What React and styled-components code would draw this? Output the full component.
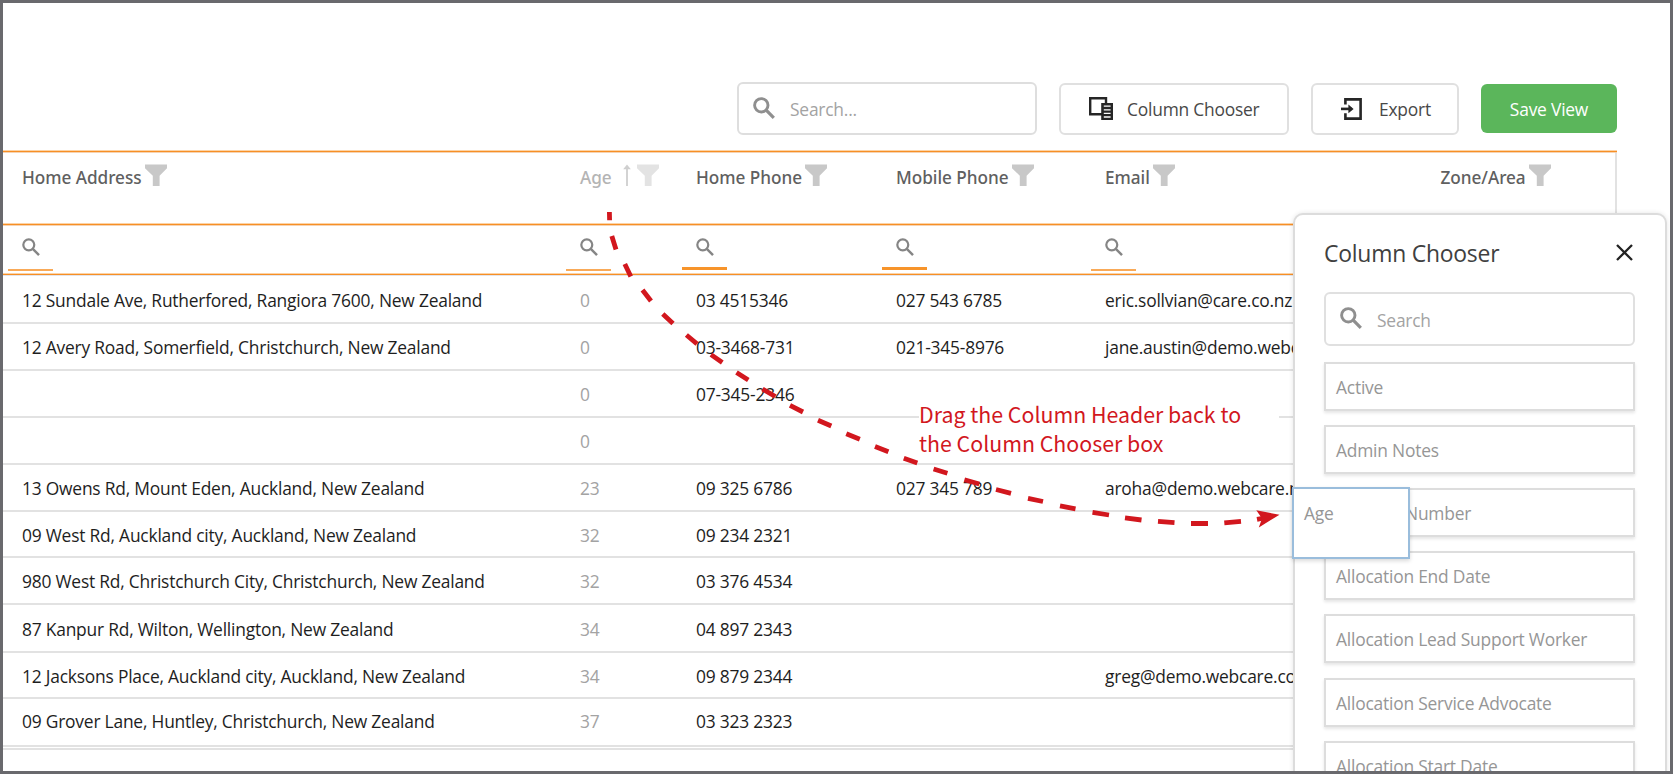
import React from 'react';
import styled, { createGlobalStyle } from 'styled-components';

const columns = [
  { key: 'address', title: 'Home Address', bar: 'thin' },
  { key: 'age', title: 'Age', bar: 'thin', dragging: true },
  { key: 'home', title: 'Home Phone', bar: 'thick' },
  { key: 'mobile', title: 'Mobile Phone', bar: 'thick' },
  { key: 'email', title: 'Email', bar: 'thin' },
  { key: 'zone', title: 'Zone/Area' },
];

const rows = [
  { address: '12 Sundale Ave, Rutherfored, Rangiora 7600, New Zealand', age: 0, home: '03 4515346', mobile: '027 543 6785', email: 'eric.sollvian@care.co.nz', height: 48 },
  { address: '12 Avery Road, Somerfield, Christchurch, New Zealand', age: 0, home: '03-3468-731', mobile: '021-345-8976', email: 'jane.austin@demo.webc', height: 47 },
  { age: 0, home: '07-345-2346', height: 47 },
  { age: 0, height: 47 },
  { address: '13 Owens Rd, Mount Eden, Auckland, New Zealand', age: 23, home: '09 325 6786', mobile: '027 345 789', email: 'aroha@demo.webcare.n', height: 47 },
  { address: '09 West Rd, Auckland city, Auckland, New Zealand', age: 32, home: '09 234 2321', height: 46 },
  { address: '980 West Rd, Christchurch City, Christchurch, New Zealand', age: 32, home: '03 376 4534', height: 47 },
  { address: '87 Kanpur Rd, Wilton, Wellington, New Zealand', age: 34, home: '04 897 2343', height: 48 },
  { address: '12 Jacksons Place, Auckland city, Auckland, New Zealand', age: 34, home: '09 879 2344', email: 'greg@demo.webcare.co', height: 46 },
  { address: '09 Grover Lane, Huntley, Christchurch, New Zealand', age: 37, home: '03 323 2323', height: 48 },
];

const hiddenColumns = [
  'Active',
  'Admin Notes',
  'Number',
  'Allocation End Date',
  'Allocation Lead Support Worker',
  'Allocation Service Advocate',
  'Allocation Start Date',
];

const dashes = [
  [609.4, 212, 609.6, 220.3],
  [611.8, 236, 616, 249.5],
  [624.8, 264, 630.8, 276.5],
  [642.5, 290, 651, 301],
  [662.8, 314, 673, 323.5],
  [686.4, 335, 697, 343.8],
  [711, 354.6, 722.3, 362.5],
  [736.5, 372.5, 748.3, 380],
  [762.5, 389, 775.3, 396.5],
  [790, 405.4, 803, 412],
  [818, 420.2, 831.3, 426],
  [846.3, 433.8, 859.8, 439.3],
  [875, 446.5, 888.4, 451.8],
  [903.8, 458.2, 917.3, 463],
  [933.6, 469, 947.4, 473.2],
  [964.4, 479.8, 979.3, 484],
  [996, 489.5, 1011, 493.3],
  [1028, 498.3, 1043, 501.5],
  [1060, 505.8, 1075.5, 508.8],
  [1092.5, 512.4, 1109, 515],
  [1125, 517.8, 1141.5, 520],
  [1158, 521.4, 1174.5, 522.7],
  [1191, 523.5, 1208, 523.5],
  [1224.3, 522.8, 1241, 521.3],
  [1257, 519.3, 1264, 518],
];

const SearchIcon = ({ size, stroke = 2.9 }) => (
  <IconSvg width={size} height={size} viewBox="0 0 22 22">
    <circle cx="8.3" cy="8.3" r="6.7" fill="none" stroke="currentColor" strokeWidth={stroke} />
    <path d="M13.2 13.2L20.8 20.8" stroke="currentColor" strokeWidth={stroke + 0.3} />
  </IconSvg>
);

const FunnelIcon = () => (
  <IconSvg width="22" height="22" viewBox="0 0 22 22">
    <path d="M0 0.5H22V4.2L14.6 11.8V22H7.8V11.8L0 4.2Z" fill="currentColor" />
  </IconSvg>
);

const SortIcon = () => (
  <IconSvg width="8" height="22" viewBox="0 0 8 22">
    <path d="M4 3V22" stroke="currentColor" strokeWidth="1.8" />
    <path d="M4 0.5L7.8 5.2H0.2Z" fill="currentColor" />
  </IconSvg>
);

const ChooserIcon = () => (
  <IconSvg width="24" height="23" viewBox="0 0 24 23">
    <path d="M13 17.2H1.2V1.2H17V6.5" fill="none" stroke="currentColor" strokeWidth="2.4" />
    <path d="M12.2 6H24V23H12.2Z" fill="currentColor" />
    <path d="M14.8 9.2H21.6M14.8 12.8H21.6M14.8 16.4H21.6M14.8 20H21.6" stroke="#fff" strokeWidth="1.3" />
  </IconSvg>
);

const ExportIcon = () => (
  <IconSvg width="21" height="22" viewBox="0 0 21 22">
    <path d="M4.4 6.6V1.4H19.6V20.6H4.4V15.2" fill="none" stroke="currentColor" strokeWidth="2.6" />
    <path d="M0 10.9H11" stroke="currentColor" strokeWidth="2.6" />
    <path d="M7.4 6.6L12.6 10.9L7.4 15.2Z" fill="currentColor" />
  </IconSvg>
);

const CloseIcon = () => (
  <IconSvg width="17" height="17" viewBox="0 0 17 17">
    <path d="M1 1L16 16M16 1L1 16" stroke="currentColor" strokeWidth="2.3" />
  </IconSvg>
);

export default function App() {
  return (
    <Frame>
      <GlobalStyle />
      <Toolbar>
        <SearchBox>
          <SearchIcon size={22} />
          <span>Search...</span>
        </SearchBox>
        <ChooserButton>
          <ChooserIcon />
          Column Chooser
        </ChooserButton>
        <ExportButton>
          <ExportIcon />
          Export
        </ExportButton>
        <SaveButton>Save View</SaveButton>
      </Toolbar>

      <Table>
        <OrangeLine />
        <HeaderRow>
          {columns.map((col) => (
            <HeaderCell key={col.key} $faded={col.dragging}>
              <span>{col.title}</span>
              {col.dragging && (
                <SortMark>
                  <SortIcon />
                </SortMark>
              )}
              <FilterMark $faded={col.dragging}>
                <FunnelIcon />
              </FilterMark>
            </HeaderCell>
          ))}
        </HeaderRow>
        <OrangeLine />
        <FilterRow>
          {columns.map((col) => (
            <FilterCell key={col.key}>
              {col.bar && (
                <>
                  <SearchIcon size={18} stroke={2.7} />
                  <FilterBar $thick={col.bar === 'thick'} />
                </>
              )}
            </FilterCell>
          ))}
        </FilterRow>
        <OrangeLine $tint />
        {rows.map((row, i) => (
          <Row key={i} $height={row.height} $last={i === rows.length - 1}>
            {columns.map((col) => (
              <Cell key={col.key} $faded={col.dragging}>
                {row[col.key]}
              </Cell>
            ))}
          </Row>
        ))}
        <TableEnd />
      </Table>

      <Note>
        Drag the Column Header back to
        <br />
        the Column Chooser box
      </Note>

      <Panel>
        <PanelHeader>
          <PanelTitle>Column Chooser</PanelTitle>
          <CloseIcon />
        </PanelHeader>
        <PanelSearch>
          <SearchIcon size={22} />
          <span>Search</span>
        </PanelSearch>
        <ColumnList>
          {hiddenColumns.map((name) => (
            <ColumnItem key={name} $indent={name === 'Number' ? 69 : 0}>
              {name}
            </ColumnItem>
          ))}
        </ColumnList>
      </Panel>

      <DragArrow width="1673" height="774" viewBox="0 0 1673 774">
        <path
          d={dashes.map(([x1, y1, x2, y2]) => `M${x1} ${y1}L${x2} ${y2}`).join('')}
          stroke="#d2171e"
          strokeWidth="4.8"
        />
        <path d="M1279.5 514.8L1256.3 510.2L1262 518.6L1258.8 527.4Z" fill="#d2171e" />
      </DragArrow>

      <DragCard>Age</DragCard>
    </Frame>
  );
}

const GlobalStyle = createGlobalStyle`
  * {
    box-sizing: border-box;
  }
  body {
    margin: 0;
    background-color: #ffffff;
  }
`;

const Frame = styled.div`
  position: relative;
  width: 1673px;
  height: 774px;
  border: 3px solid #69696d;
  overflow: hidden;
  background-color: #ffffff;
  font-family: 'Open Sans', 'Noto Sans', sans-serif;
  font-size: 17.4px;
  letter-spacing: -0.21px;
  white-space: nowrap;
`;

const IconSvg = styled.svg`
  display: block;
  flex-shrink: 0;
`;

const Toolbar = styled.div`
  height: 147px;
  padding: 0 53px 15px 0;
  display: flex;
  align-items: flex-end;
  justify-content: flex-end;
  gap: 22.5px;
`;

const SearchBox = styled.div`
  width: 299.5px;
  height: 53px;
  padding: 0 14px;
  display: flex;
  align-items: center;
  gap: 15px;
  border: 2px solid #dedede;
  border-radius: 6px;
  color: #a3a3a3;
  svg {
    margin-bottom: 2px;
    color: #8f8f8f;
  }
  span {
    padding-top: 1px;
  }
`;

const Button = styled.div`
  height: 52px;
  display: flex;
  align-items: center;
  border: 2px solid #e0e0e0;
  border-radius: 6px;
  color: #484848;
  svg {
    margin-bottom: 1px;
    color: #262626;
  }
`;

const ChooserButton = styled(Button)`
  width: 229.5px;
  padding-left: 28px;
  gap: 14px;
`;

const ExportButton = styled(Button)`
  width: 147.5px;
  padding-left: 28px;
  gap: 17px;
`;

const SaveButton = styled(Button)`
  width: 136px;
  height: 49px;
  margin-bottom: 2px;
  padding-top: 1px;
  justify-content: center;
  border: none;
  background-color: #5bb65b;
  color: #ffffff;
`;

const Table = styled.div`
  width: 1614px;
`;

const OrangeLine = styled.div`
  height: 3px;
  background: linear-gradient(
    #fcd3a6 0 1px,
    #f78f25 1px 2px,
    ${({ $tint }) => ($tint ? '#e3e4ea' : '#f5d3b3')} 2px 3px
  );
`;

const GridRow = styled.div`
  padding-left: 5px;
  display: grid;
  grid-template-columns: 558px 116px 200px 209px 335.5px 1fr;
`;

const HeaderRow = styled(GridRow)`
  height: 70px;
  border-right: 2px solid #e2e2e2;
`;

const HeaderCell = styled.div`
  height: 48px;
  padding-left: 14px;
  display: flex;
  align-items: center;
  font-family: 'Noto Sans', 'Open Sans', sans-serif;
  font-weight: 500;
  font-size: 17.2px;
  letter-spacing: -0.04px;
  color: ${({ $faded }) => ($faded ? '#b4b4b4' : '#606060')};
`;

const FilterMark = styled.div`
  margin: 0 0 5px ${({ $faded }) => ($faded ? '6px' : '3.5px')};
  color: ${({ $faded }) => ($faded ? '#e3e3e3' : '#c8c8c8')};
`;

const SortMark = styled.div`
  margin: 0 0 5px 11.5px;
  color: #cfcfcf;
`;

const FilterRow = styled(GridRow)`
  height: 47px;
`;

const FilterCell = styled.div`
  padding: 11.5px 0 2px;
  display: flex;
  flex-direction: column;
  justify-content: space-between;
  color: #858585;
  svg {
    margin-left: 13.5px;
  }
`;

const FilterBar = styled.div`
  width: 45px;
  height: ${({ $thick }) => ($thick ? '3px' : '2px')};
  margin-bottom: ${({ $thick }) => ($thick ? '1px' : '0')};
  background-color: ${({ $thick }) => ($thick ? '#f7942a' : '#f9aa58')};
`;

const Row = styled(GridRow)`
  height: ${({ $height }) => $height}px;
  padding-bottom: ${({ $last }) => ($last ? '3px' : '0')};
  border-bottom: 2px solid #e2e2e2;
`;

const Cell = styled.div`
  padding: 1.4px 0 0 14px;
  display: flex;
  align-items: center;
  color: ${({ $faded }) => ($faded ? '#a3a3a3' : '#1e1e1e')};
`;

const TableEnd = styled.div`
  height: 3px;
  border-bottom: 2px solid #e2e2e2;
`;

const Note = styled.div`
  position: absolute;
  left: 916px;
  top: 395.5px;
  width: 360px;
  background: linear-gradient(#ffffff, #ffffff) 0 0 / 100% 52px no-repeat;
  font-family: 'Noto Sans CJK SC', 'Open Sans', sans-serif;
  font-size: 21.35px;
  line-height: 29px;
  letter-spacing: 0;
  color: #d2171e;
`;

const Panel = styled.div`
  position: absolute;
  left: 1289.5px;
  top: 210px;
  width: 374.5px;
  height: 600px;
  padding: 0 29.5px;
  border: 2px solid #dcdcdc;
  border-radius: 10px;
  box-shadow: 0 0 5px rgba(0, 0, 0, 0.1);
  background-color: #ffffff;
`;

const PanelHeader = styled.div`
  height: 77px;
  padding: 0 3px 3px 0;
  display: flex;
  align-items: center;
  justify-content: space-between;
  color: #222222;
`;

const PanelTitle = styled.div`
  padding-top: 3px;
  font-size: 22.9px;
  color: #404040;
`;

const PanelSearch = styled(SearchBox)`
  width: 311px;
  height: 54px;
  border-color: #e0e0e0;
  padding: 0 14px;
`;

const ColumnList = styled.div`
  margin-top: 15.6px;
  display: flex;
  flex-direction: column;
  gap: 14.2px;
`;

const ColumnItem = styled.div`
  width: 311px;
  height: 49px;
  flex-shrink: 0;
  padding: 1px 0 0 ${({ $indent }) => 10 + $indent}px;
  display: flex;
  align-items: center;
  border: 2px solid #dddddd;
  box-shadow: 0 2px 3px rgba(0, 0, 0, 0.1);
  color: #969696;
`;

const DragArrow = styled.svg`
  position: absolute;
  left: -3px;
  top: -3px;
`;

const DragCard = styled.div`
  position: absolute;
  left: 1289px;
  top: 484px;
  width: 118px;
  height: 72px;
  padding: 12px 0 0 10px;
  border: 2px solid #9abddc;
  box-shadow: 0 2px 4px rgba(0, 0, 0, 0.15);
  background-color: #ffffff;
  color: #969696;
`;
